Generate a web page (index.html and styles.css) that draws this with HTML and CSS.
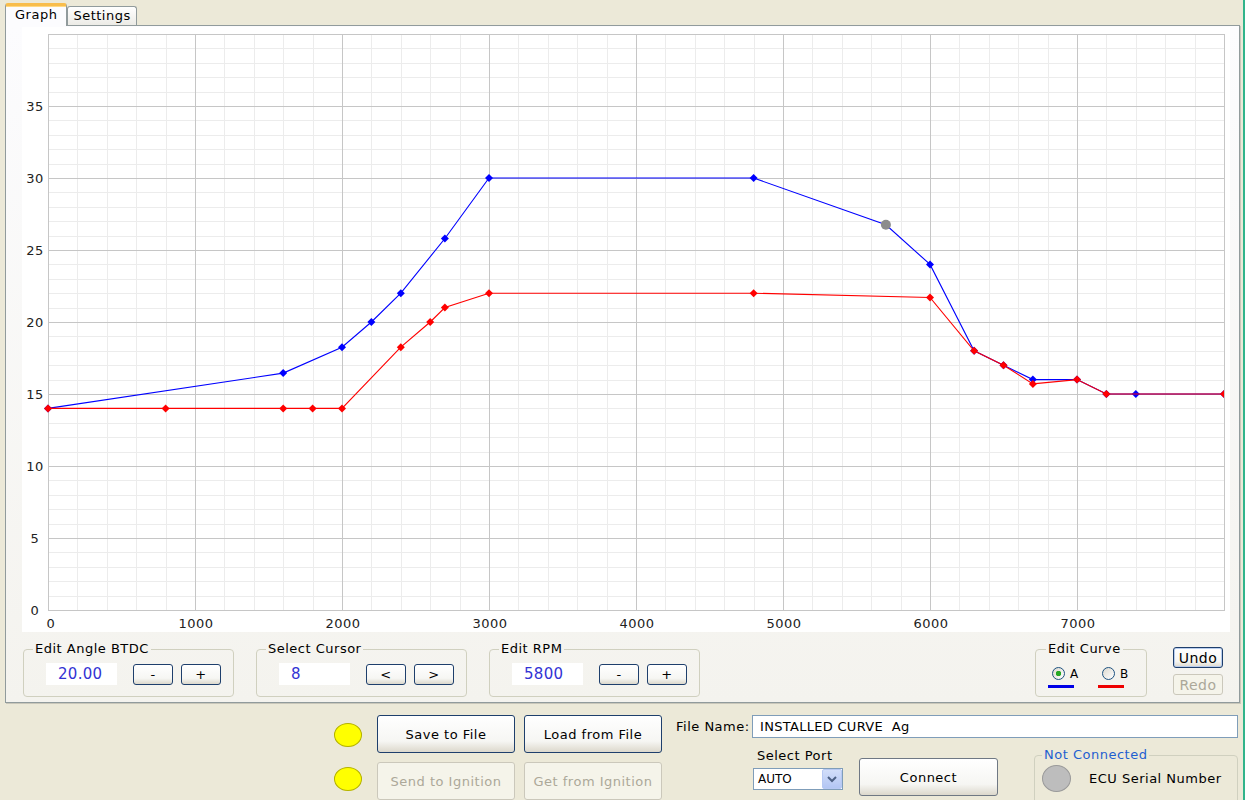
FILE: index.html
```html
<!DOCTYPE html>
<html lang="en">
<head>
    <meta charset="UTF-8">
    <meta name="viewport" content="width=device-width, initial-scale=1.0">
    <title>Ignition Curve Editor</title>
    <link rel="stylesheet" href="styles.css">
</head>
<body>
<div class="window">
    <div class="tabs">
        <div class="tab active">Graph</div>
        <div class="tab">Settings</div>
    </div>

    <div class="tab-panel">
        <svg class="chart" id="chart" width="1208" height="605" viewBox="22 27 1208 605"></svg>

        <div class="controls">
            <fieldset class="group">
                <legend>Edit Angle BTDC</legend>
                <input class="value" type="text" value="20.00">
                <button class="btn small">-</button>
                <button class="btn small">+</button>
            </fieldset>
            <fieldset class="group">
                <legend>Select Cursor</legend>
                <input class="value" type="text" value="8">
                <button class="btn small">&lt;</button>
                <button class="btn small">&gt;</button>
            </fieldset>
            <fieldset class="group">
                <legend>Edit RPM</legend>
                <input class="value" type="text" value="5800">
                <button class="btn small">-</button>
                <button class="btn small">+</button>
            </fieldset>

            <fieldset class="group curve">
                <legend>Edit Curve</legend>
                <label class="pick pick-a">
                    <span class="pick-top"><input type="radio" name="curve" checked><span>A</span></span>
                    <span class="swatch"></span>
                </label>
                <label class="pick pick-b">
                    <span class="pick-top"><input type="radio" name="curve"><span>B</span></span>
                    <span class="swatch"></span>
                </label>
            </fieldset>

            <div class="history">
                <button class="btn undo">Undo</button>
                <button class="btn" disabled>Redo</button>
            </div>
        </div>
    </div>

    <div class="bottom">
        <div class="leds">
            <span class="led"></span>
            <span class="led"></span>
        </div>
        <div class="file-buttons">
            <button class="btn big">Save to File</button>
            <button class="btn big">Load from File</button>
            <button class="btn big" disabled>Send to Ignition</button>
            <button class="btn big" disabled>Get from Ignition</button>
        </div>
        <div class="file-side">
            <div class="file-row">
                <label class="file-label">File Name:</label>
                <input class="file-name" type="text" value="INSTALLED CURVE  Ag">
            </div>
            <div class="port-row">
                <div class="port">
                    <span class="port-label">Select Port</span>
                    <div class="select">
                        <span>AUTO</span>
                        <span class="drop">
                            <svg width="10" height="8" viewBox="0 0 10 8"><path d="M1 2 L5 6 L9 2" fill="none" stroke="#4d6185" stroke-width="2"/></svg>
                        </span>
                    </div>
                </div>
                <button class="btn big connect">Connect</button>
                <fieldset class="status">
                    <legend>Not Connected</legend>
                    <span class="ecu-led"></span>
                    <span>ECU Serial Number</span>
                </fieldset>
            </div>
        </div>
    </div>
</div>

<script>
    const svg = document.getElementById("chart");
    const NS = "http://www.w3.org/2000/svg";

    // plot area: 0..8000 rpm, 0..40 degrees
    const sx = rpm => 48 + rpm * 0.147;
    const sy = deg => 610 - deg * 14.4;

    const curveA = [[0,14],[1600,16.45],[2000,18.25],[2200,20],[2400,22],[2700,25.8],[3000,30],[4800,30],
        [5700,26.75],[6000,24],[6300,18],[6500,17],[6700,16],[7000,16],[7200,15],[7400,15],[8000,15]];
    const curveB = [[0,14],[800,14],[1600,14],[1800,14],[2000,14],[2400,18.25],[2600,20],[2700,21],[3000,22],
        [4800,22],[6000,21.7],[6300,18],[6500,17],[6700,15.7],[7000,16],[7200,15],[8000,15]];
    const cursor = 8;

    function add(tag, attrs, parent) {
        const el = document.createElementNS(NS, tag);
        for (const k in attrs) el.setAttribute(k, attrs[k]);
        (parent || svg).appendChild(el);
        return el;
    }

    add("rect", { x: 22, y: 27, width: 1208, height: 605, fill: "#fff" });

    const grid = add("g", { "shape-rendering": "crispEdges" });
    function vline(rpm, color) {
        const x = Math.round(sx(rpm)) + 0.5;
        add("line", { x1: x, y1: 34, x2: x, y2: 610, stroke: color }, grid);
    }
    function hline(deg, color) {
        const y = Math.round(sy(deg)) + 0.5;
        add("line", { x1: 48, y1: y, x2: 1224, y2: y, stroke: color }, grid);
    }

    for (let r = 200; r < 8000; r += 200) if (r % 1000) vline(r, "#ececec");
    for (let d = 1; d < 40; d++) if (d % 5) hline(d, "#ececec");
    for (let r = 1000; r < 8000; r += 1000) vline(r, "#c6c6c6");
    for (let d = 5; d < 40; d += 5) hline(d, "#c6c6c6");
    add("rect", { x: 48.5, y: 34.5, width: 1176, height: 576, fill: "none", stroke: "#c6c6c6" }, grid);

    for (let d = 0; d <= 35; d += 5) {
        add("text", { x: 35, y: sy(d) + 5, "text-anchor": "middle" }).textContent = d;
    }
    for (let r = 0; r <= 7000; r += 1000) {
        add("text", { x: sx(r) + (r ? 1 : 3), y: 628, "text-anchor": "middle" }).textContent = r;
    }

    const defs = add("defs", {});
    const clip = add("clipPath", { id: "plotClip" }, defs);
    add("rect", { x: 38, y: 27, width: 1186, height: 590 }, clip);
    const series = add("g", { "clip-path": "url(#plotClip)" });

    function drawCurve(points, color, skip) {
        add("polyline", {
            points: points.map(p => sx(p[0]) + "," + sy(p[1])).join(" "),
            fill: "none", stroke: color, "stroke-width": 1.1
        }, series);
        points.forEach((p, i) => {
            if (i === skip) return;
            const x = sx(p[0]), y = sy(p[1]);
            add("polygon", {
                points: `${x},${y - 4} ${x + 4},${y} ${x},${y + 4} ${x - 4},${y}`,
                fill: color
            }, series);
        });
    }

    drawCurve(curveA, "#0000ff", cursor);
    drawCurve(curveB, "#ff0000", -1);

    const c = curveA[cursor];
    add("circle", { cx: sx(c[0]), cy: sy(c[1]), r: 5, fill: "#8c8c8c" }, series);
</script>
</body>
</html>
```

FILE: styles.css
```css
body {
    margin: 0;
    background: #ece9d8;
    font-family: "DejaVu Sans", Verdana, sans-serif;
    font-size: 13px;
    letter-spacing: 0.5px;
    color: #000;
    overflow: hidden;
}

.window {
    width: 1243px;
    height: 800px;
    border-right: 2px solid #31b48b;
    overflow: hidden;
}

/* tabs */
.tabs {
    display: flex;
    align-items: flex-end;
    height: 25px;
    padding-left: 5px;
    position: relative;
    z-index: 1;
}

.tab {
    box-sizing: border-box;
    height: 19px;
    padding: 0 5px;
    border: 1px solid #919b9c;
    border-bottom: none;
    border-radius: 3px 3px 0 0;
    background: linear-gradient(#ffffff, #ecebe6);
    line-height: 18px;
}

.tab.active {
    height: 23px;
    margin-bottom: -1px;
    padding: 0 9px;
    border-top: 3px solid #f8bd4c;
    box-shadow: inset 0 1px 0 #ffd983;
    background: #fcfcfe;
    line-height: 18px;
}

.tab-panel {
    box-sizing: border-box;
    width: 1235px;
    height: 678px;
    margin-left: 5px;
    border: 1px solid #919b9c;
    box-shadow: 1px 1px 0 #c9c7ba;
    background: linear-gradient(#fcfcfe, #f4f3ee);
    display: flex;
    flex-direction: column;
}

.chart {
    display: block;
    margin: 1px 0 0 16px;
}

.chart text {
    font-family: "DejaVu Sans", Verdana, sans-serif;
    font-size: 13px;
    letter-spacing: 0.5px;
    fill: #222;
}

/* group boxes under the graph */
.controls {
    display: flex;
    align-items: flex-start;
    margin-top: 9px;
    padding: 0 16px 0 17px;
}

fieldset {
    margin: 0;
    min-width: 0;
    border: 1px solid #d0d0bf;
    border-radius: 4px;
}

legend {
    padding: 0 2px;
    line-height: 16px;
}

.group {
    display: flex;
    align-items: center;
    margin-right: 22px;
    padding: 6px 12px 11px 0;
}

.group legend {
    margin-left: 9px;
}

.value {
    box-sizing: border-box;
    width: 71px;
    height: 22px;
    margin: 0 16px 0 22px;
    padding: 0 0 0 12px;
    border: none;
    background: #fff;
    color: #3333d4;
    font-family: "DejaVu Sans", Verdana, sans-serif;
    font-size: 15px;
    letter-spacing: 0.3px;
    outline: none;
}

.btn {
    box-sizing: border-box;
    padding: 0;
    border: 1px solid #1e3f6c;
    border-radius: 3px;
    background: linear-gradient(#ffffff, #f6f6f3 70%, #dcd8cc);
    color: #000;
    font-family: "DejaVu Sans", Verdana, sans-serif;
    font-size: 13px;
    letter-spacing: 0.5px;
    cursor: pointer;
}

.btn:disabled {
    border-color: #cbc8bb;
    background: #f5f4ea;
    color: #aca899;
    cursor: default;
}

.btn.small {
    width: 40px;
    height: 21px;
}

.btn.small + .btn.small {
    margin-left: 8px;
}

.curve {
    display: flex;
    margin-left: auto;
    margin-right: 26px;
    width: 112px;
    box-sizing: border-box;
    padding: 6px 0 8px 12px;
}

.curve legend {
    margin-left: -2px;
}

.pick {
    display: flex;
    flex-direction: column;
    width: 26px;
    flex-shrink: 0;
}

.pick-b {
    margin-left: 24px;
}

.pick-top {
    display: flex;
    align-items: center;
    margin: 4px 0 0 4px;
    height: 13px;
    font-size: 12px;
}

.pick-top span {
    margin-left: 5px;
}

.pick input {
    appearance: none;
    flex: 0 0 13px;
    box-sizing: border-box;
    width: 13px;
    height: 13px;
    margin: 0;
    border: 1px solid #1c5180;
    border-radius: 50%;
    background: linear-gradient(135deg, #dcd9cf, #ffffff);
}

.pick input:checked {
    background: radial-gradient(circle, #26a826 0 2.5px, transparent 3px), linear-gradient(135deg, #dcd9cf, #ffffff);
}

.swatch {
    height: 3px;
    margin-top: 5px;
}

.pick-a .swatch {
    background: #0000e6;
}

.pick-b .swatch {
    background: #ee0000;
}

.history {
    display: flex;
    flex-direction: column;
    gap: 6px;
    margin-top: 6px;
}

.history .btn {
    width: 50px;
    height: 21px;
    font-size: 14px;
}

.undo {
    border-color: #1e3f6c;
    box-shadow: inset 0 0 0 1px #b8cdee;
}

/* bottom strip */
.bottom {
    display: flex;
    padding: 12px 0 0 334px;
}

.leds {
    display: flex;
    flex-direction: column;
    width: 28px;
    margin-right: 15px;
}

.led {
    box-sizing: border-box;
    width: 28px;
    height: 24px;
    margin-top: 8px;
    border: 1px solid #b3b000;
    border-radius: 50%;
    background: #ffff00;
}

.led + .led {
    margin-top: 20px;
}

.file-buttons {
    display: grid;
    grid-template-columns: 138px 138px;
    grid-auto-rows: 38px;
    gap: 9px;
}

.btn.big {
    font-size: 13px;
}

.file-side {
    margin-left: 14px;
    width: 562px;
}

.file-row {
    display: flex;
    align-items: center;
    height: 23px;
}

.file-label {
    width: 76px;
}

.file-name {
    box-sizing: border-box;
    flex: 1;
    height: 23px;
    padding: 0 7px;
    border: 1px solid #7f9db9;
    background: #fff;
    font-family: "DejaVu Sans", Verdana, sans-serif;
    font-size: 13px;
    letter-spacing: 0.3px;
    outline: none;
}

.port-row {
    display: flex;
    align-items: flex-start;
    margin-top: 10px;
}

.port {
    display: flex;
    flex-direction: column;
    width: 90px;
    margin-left: 77px;
}

.port-label {
    margin-left: 4px;
    line-height: 16px;
}

.select {
    box-sizing: border-box;
    display: flex;
    align-items: center;
    height: 22px;
    margin-top: 4px;
    border: 1px solid #7f9db9;
    background: #fff;
    font-size: 12px;
    letter-spacing: 0;
}

.select span:first-child {
    padding-left: 4px;
}

.drop {
    box-sizing: border-box;
    display: flex;
    align-items: center;
    justify-content: center;
    width: 20px;
    height: 20px;
    margin-left: auto;
    border: 1px solid #b7c9f3;
    border-radius: 2px;
    background: linear-gradient(#d2def9, #b3c6f4);
}

.connect {
    width: 139px;
    height: 38px;
    margin: 10px 0 0 16px;
    border-color: #6f7884;
}

.status {
    display: flex;
    align-items: center;
    width: 204px;
    box-sizing: border-box;
    margin: -1px 0 0 36px;
    padding: 2px 0 20px 7px;
}

.status legend {
    margin-left: 0;
    color: #1f5fd0;
}

.ecu-led {
    box-sizing: border-box;
    flex-shrink: 0;
    width: 29px;
    height: 27px;
    margin-right: 18px;
    border: 1px solid #9a9a9a;
    border-radius: 50%;
    background: #bdbdbd;
}
```
